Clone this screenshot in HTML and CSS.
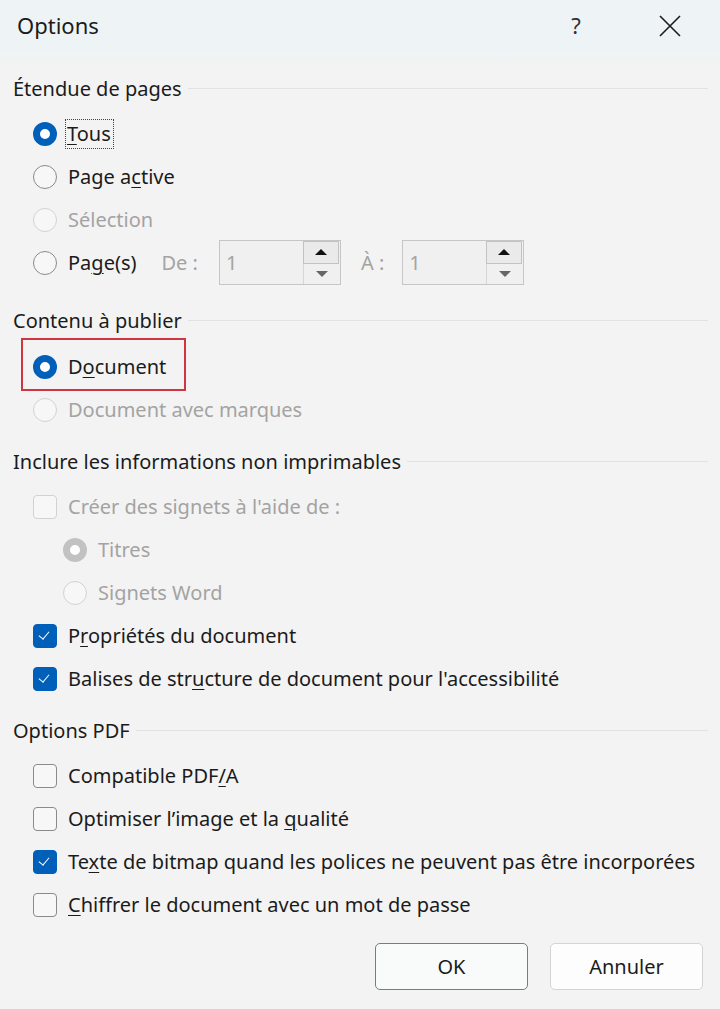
FILE: index.html
```html
<!DOCTYPE html>
<html>
<head lang="fr">
    <meta charset="utf-8">
    <title>Options</title>
    <link rel="stylesheet" href="styles.css">
</head>
<body>
<div class="dialog">
    <div class="titlebar">
        <span class="title">Options</span>
        <span class="help">?</span>
        <span class="close">
            <svg width="24" height="24" viewBox="0 0 24 24"><path d="M2 2 L22 22 M22 2 L2 22" stroke="#1b1b1b" stroke-width="1.6" fill="none"/></svg>
        </span>
    </div>

    <div class="content">
        <div class="heading"><span>Étendue de pages</span></div>
        <div class="group">
            <div class="row"><span class="radio on"></span><span class="focus"><u>T</u>ous</span></div>
            <div class="row"><span class="radio"></span><span>Page a<u>c</u>tive</span></div>
            <div class="row off"><span class="radio"></span><span>Sélection</span></div>
            <div class="row range">
                <span class="radio"></span><span>Pa<u>g</u>e(s)</span>
                <span class="lbl">De :</span>
                <span class="spin"><span class="val">1</span><span class="arrows"><span class="up"></span><span class="down"></span></span></span>
                <span class="lbl">À :</span>
                <span class="spin"><span class="val">1</span><span class="arrows"><span class="up"></span><span class="down"></span></span></span>
            </div>
        </div>

        <div class="heading"><span>Contenu à publier</span></div>
        <div class="group">
            <div class="row marked"><span class="radio on"></span><span>D<u>o</u>cument</span><span class="redbox"></span></div>
            <div class="row off"><span class="radio"></span><span>Document avec marques</span></div>
        </div>

        <div class="heading"><span>Inclure les informations non imprimables</span></div>
        <div class="group">
            <div class="row off"><span class="check"></span><span>Créer des signets à l'aide de :</span></div>
            <div class="row off sub"><span class="radio on"></span><span>Titres</span></div>
            <div class="row off sub"><span class="radio"></span><span>Signets Word</span></div>
            <div class="row"><span class="check on"></span><span>P<u>r</u>opriétés du document</span></div>
            <div class="row"><span class="check on"></span><span>Balises de str<u>u</u>cture de document pour l'accessibilité</span></div>
        </div>

        <div class="heading"><span>Options PDF</span></div>
        <div class="group">
            <div class="row"><span class="check"></span><span>Compatible PDF<u>/</u>A</span></div>
            <div class="row"><span class="check"></span><span>Optimiser l’image et la <u>q</u>ualité</span></div>
            <div class="row"><span class="check on"></span><span>Te<u>x</u>te de bitmap quand les polices ne peuvent pas être incorporées</span></div>
            <div class="row"><span class="check"></span><span><u>C</u>hiffrer le document avec un mot de passe</span></div>
        </div>

        <div class="footer">
            <div class="button default">OK</div>
            <div class="button">Annuler</div>
        </div>
    </div>
</div>
</body>
</html>
```

FILE: styles.css
```css
html, body {
    margin: 0;
    padding: 0;
}

body {
    width: 720px;
    height: 1009px;
    background: #f3f3f3;
    font-family: "Noto Sans", "Open Sans", sans-serif;
    font-size: 20px;
    color: #1b1b1b;
    overflow: hidden;
}

.titlebar {
    height: 66px;
    display: flex;
    align-items: flex-start;
    background: linear-gradient(#eef4f5 0, #eef4f5 52px, #f3f3f3 66px);
}

.title {
    font-size: 22px;
    margin: 10px 0 0 17px;
    flex: 1;
}

.help {
    font-size: 22px;
    margin-top: 10px;
    width: 24px;
    text-align: center;
    color: #333;
}

.close {
    margin: 14px 38px 0 70px;
    height: 24px;
}

.content {
    padding: 0 12px 0 13px;
}

.heading {
    height: 44px;
    display: flex;
    align-items: center;
}

.heading:after {
    content: "";
    flex: 1;
    height: 1px;
    margin-left: 6px;
    background: #e2e2e2;
}

.group {
    padding: 2px 0 8px 0;
}

.row {
    height: 43px;
    display: flex;
    align-items: center;
    padding-left: 20px;
    white-space: nowrap;
}

.row.sub {
    padding-left: 50px;
}

.row.off {
    color: #a3a3a3;
}

.row.range {
    margin-bottom: 6px;
}

.row.marked {
    position: relative;
    margin-top: 1px;
}

.redbox {
    position: absolute;
    left: 8px;
    top: -7px;
    width: 161px;
    height: 49px;
    border: 2px solid #cf3642;
}

.radio {
    width: 24px;
    height: 24px;
    box-sizing: border-box;
    border-radius: 50%;
    border: 1.5px solid #8a8a8a;
    background: #f7f7f7;
    margin-right: 11px;
    flex-shrink: 0;
}

.radio.on {
    border: 7px solid #005fb8;
    background: #fff;
}

.row.off .radio {
    border-color: #d2d2d2;
}

.row.off .radio.on {
    border: 7px solid #c2c2c2;
}

.check {
    width: 24px;
    height: 24px;
    box-sizing: border-box;
    border-radius: 4px;
    border: 1.5px solid #8a8a8a;
    background: #f7f7f7;
    margin-right: 11px;
    flex-shrink: 0;
    position: relative;
}

.row.off .check {
    border-color: #d2d2d2;
}

.check.on {
    background: #005fb8;
    border-color: #005fb8;
}

.check.on:after {
    content: "";
    position: absolute;
    left: 7px;
    top: 4px;
    width: 5px;
    height: 9px;
    border-right: 1.5px solid #fff;
    border-bottom: 1.5px solid #fff;
    transform: rotate(40deg);
}

.focus {
    border: 1px dotted #444;
    padding: 0 2px 0 1px;
    margin-left: -3px;
    line-height: 28px;
}

u {
    text-underline-offset: 3px;
    text-decoration-thickness: 1px;
}

.lbl {
    color: #a3a3a3;
    margin: 0 21px 0 25px;
}

.range .lbl + .spin + .lbl {
    margin: 0 18px 0 20px;
}

.spin {
    width: 122px;
    height: 45px;
    box-sizing: border-box;
    border: 1px solid #c6c6c6;
    background: #f0f0f0;
    display: flex;
}

.val {
    flex: 1;
    color: #a3a3a3;
    padding: 8px 0 0 6px;
}

.arrows {
    width: 36px;
    display: flex;
    flex-direction: column;
    border-left: 1px solid #d6d6d6;
}

.up, .down {
    flex: 1;
    position: relative;
}

.up {
    border: 1px solid #c2c2c2;
    background: #eaeaea;
    margin: 0 1px 0 -1px;
}

.up:after, .down:after {
    content: "";
    position: absolute;
    left: 50%;
    top: 50%;
    margin: -3px 0 0 -6px;
    border-left: 6px solid transparent;
    border-right: 6px solid transparent;
}

.up:after {
    border-bottom: 6px solid #111;
}

.down:after {
    border-top: 6px solid #666;
}

.footer {
    display: flex;
    justify-content: flex-end;
    gap: 22px;
    padding: 9px 5px 0 0;
}

.button {
    width: 153px;
    height: 47px;
    box-sizing: border-box;
    border: 1px solid #d4d4d4;
    border-radius: 5px;
    background: #fdfdfd;
    display: flex;
    align-items: center;
    justify-content: center;
}

.button.default {
    border: 1.5px solid #5b8793;
    background: #f9fbfb;
}
```
